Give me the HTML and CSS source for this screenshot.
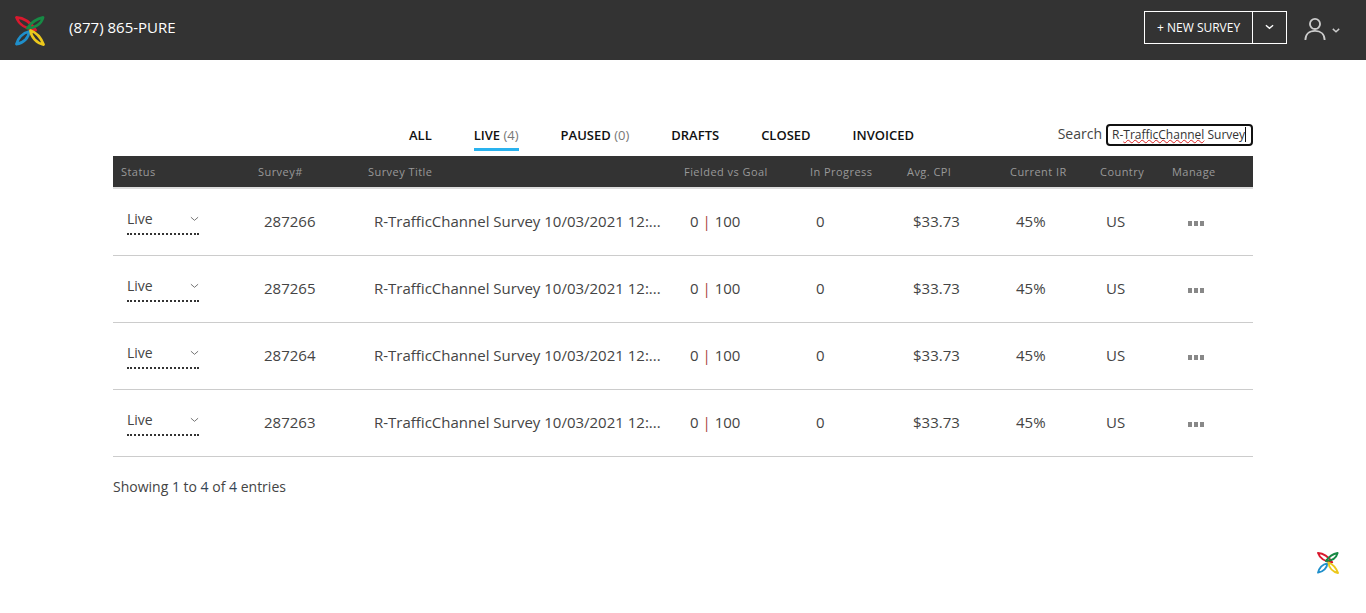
FILE: index.html
```html
<!DOCTYPE html>
<html lang="en">
<head>
  <meta charset="UTF-8">
  <title>Surveys</title>
  <meta name="viewport" content="width=device-width, initial-scale=1.0">
  <link rel="stylesheet" href="styles.css">
</head>
<body>
  <!-- Top bar -->
  <header class="topbar">
    <svg class="logo" viewBox="0 0 32 32" fill="none" stroke-width="2.800" stroke-linejoin="round">
      <g id="petals">
        <path stroke="#d9192e" d="M1.500 1.500C10 2 16 6 22 15 12 14 4 9 1.500 1.500Z"/>
        <path stroke="#178a45" d="M30 1.500C23 3 18 6 13 13 21 13 28 9 30 1.500Z"/>
        <path stroke="#1f8fcb" d="M1.500 30C3 24 8 18 15 16.500 15 23 9 29 1.500 30Z"/>
        <path stroke="#ecc81c" d="M30.500 30.500C28 24 24 18 16.500 15.500 17.500 23 23 29 30.500 30.500Z"/>
      </g>
    </svg>
    <span class="phone">(877) 865-PURE</span>
    <div class="topbar-right">
      <div class="new-survey">
        <span class="new-survey-label">+ NEW SURVEY</span>
        <span class="new-survey-caret">
          <svg class="chevron" viewBox="0 0 10 6" width="9" height="6"><path d="M1 1l4 3.500L9 1" fill="none" stroke="#fff" stroke-width="1.500"/></svg>
        </span>
      </div>
      <svg class="user-icon" viewBox="0 0 24 28" width="22" height="26" fill="none" stroke="#ccc" stroke-width="2">
        <circle cx="12" cy="8.500" r="5.500"/>
        <path d="M1.500 26c0-6 4-10 10.500-10s10.500 4 10.500 10"/>
      </svg>
      <svg class="chevron" viewBox="0 0 10 6" width="8" height="5"><path d="M1 1l4 3.500L9 1" fill="none" stroke="#ccc" stroke-width="1.800"/></svg>
    </div>
  </header>

  <main class="content">
    <!-- Tabs and search -->
    <div class="toolbar">
      <nav class="tabs">
        <a class="tab">ALL</a>
        <a class="tab active">LIVE <span class="count">(4)</span></a>
        <a class="tab">PAUSED <span class="count">(0)</span></a>
        <a class="tab">DRAFTS</a>
        <a class="tab">CLOSED</a>
        <a class="tab">INVOICED</a>
      </nav>
      <div class="search">
        <span>Search</span>
        <div class="search-box">R-<span class="misspelled">TrafficChannel</span> Survey<i class="cursor"></i></div>
      </div>
    </div>

    <!-- Surveys list -->
    <div class="list">
      <div class="row head">
        <div>Status</div>
        <div>Survey#</div>
        <div>Survey Title</div>
        <div>Fielded vs Goal</div>
        <div>In Progress</div>
        <div>Avg. CPI</div>
        <div>Current IR</div>
        <div>Country</div>
        <div>Manage</div>
      </div>
      <div class="row item">
        <div><div class="status">Live<svg viewBox="0 0 10 6" width="9" height="6"><path d="M1 1l4 3.500L9 1" fill="none" stroke="#666" stroke-width="1"/></svg></div></div>
        <div>287266</div>
        <div class="title">R-TrafficChannel Survey 10/03/2021 12:...</div>
        <div>0 <b class="sep">|</b> 100</div>
        <div>0</div>
        <div>$33.73</div>
        <div>45%</div>
        <div>US</div>
        <div class="manage"><i></i><i></i><i></i></div>
      </div>
      <div class="row item">
        <div><div class="status">Live<svg viewBox="0 0 10 6" width="9" height="6"><path d="M1 1l4 3.500L9 1" fill="none" stroke="#666" stroke-width="1"/></svg></div></div>
        <div>287265</div>
        <div class="title">R-TrafficChannel Survey 10/03/2021 12:...</div>
        <div>0 <b class="sep">|</b> 100</div>
        <div>0</div>
        <div>$33.73</div>
        <div>45%</div>
        <div>US</div>
        <div class="manage"><i></i><i></i><i></i></div>
      </div>
      <div class="row item">
        <div><div class="status">Live<svg viewBox="0 0 10 6" width="9" height="6"><path d="M1 1l4 3.500L9 1" fill="none" stroke="#666" stroke-width="1"/></svg></div></div>
        <div>287264</div>
        <div class="title">R-TrafficChannel Survey 10/03/2021 12:...</div>
        <div>0 <b class="sep">|</b> 100</div>
        <div>0</div>
        <div>$33.73</div>
        <div>45%</div>
        <div>US</div>
        <div class="manage"><i></i><i></i><i></i></div>
      </div>
      <div class="row item">
        <div><div class="status">Live<svg viewBox="0 0 10 6" width="9" height="6"><path d="M1 1l4 3.500L9 1" fill="none" stroke="#666" stroke-width="1"/></svg></div></div>
        <div>287263</div>
        <div class="title">R-TrafficChannel Survey 10/03/2021 12:...</div>
        <div>0 <b class="sep">|</b> 100</div>
        <div>0</div>
        <div>$33.73</div>
        <div>45%</div>
        <div>US</div>
        <div class="manage"><i></i><i></i><i></i></div>
      </div>
    </div>

    <p class="entries">Showing <span class="num">1</span> to <span class="num">4</span> of <span class="num">4</span> entries</p>
  </main>

  <svg class="corner-logo" viewBox="0 0 32 32" fill="none" stroke-width="2.800" stroke-linejoin="round"><use href="#petals"/></svg>
</body>
</html>
```

FILE: styles.css
```css
* {
  box-sizing: border-box;
  margin: 0;
  padding: 0;
}

html, body {
  height: 100%;
  overflow: hidden;
}

body {
  font-family: "Open Sans", sans-serif;
  background: #fff;
  color: #444;
  font-size: 14px;
}

/* Top bar */
.topbar {
  display: flex;
  align-items: center;
  height: 60px;
  padding: 0 26px 0 15px;
  background: #333;
  color: #fff;
}

.logo {
  width: 30px;
  height: 30px;
  margin-top: 1px;
}

.phone {
  margin: -6px 0 0 24px;
  font-size: 15px;
}

.topbar-right {
  display: flex;
  align-items: center;
  margin-left: auto;
}

.new-survey {
  display: flex;
  height: 33px;
  margin-top: -6px;
  border: 1px solid #fff;
  font-size: 12px;
}

.new-survey-label {
  display: flex;
  align-items: center;
  width: 108px;
  padding-left: 12px;
  border-right: 1px solid #fff;
}

.new-survey-caret {
  display: flex;
  align-items: center;
  justify-content: center;
  width: 33px;
}

.user-icon {
  margin: -2px 0 0 17px;
}

.user-icon + .chevron {
  margin: 0 0 0 6px;
}

/* Tabs and search */
.content {
  width: 1140px;
  margin-left: 113px;
}

.toolbar {
  display: flex;
  align-items: flex-start;
  height: 96px;
  padding-top: 64px;
}

.tabs {
  display: flex;
  gap: 42px;
  margin-left: 296px;
}

.tab {
  height: 27px;
  padding-top: 2px;
  color: #111;
  font-size: 13px;
  font-weight: 600;
}

.tab.active {
  border-bottom: 3px solid #29b2ee;
}

.count {
  color: #777;
  font-weight: 400;
}

.search {
  display: flex;
  align-items: center;
  gap: 4px;
  margin-left: auto;
  font-size: 14px;
  line-height: 18px;
}

.search-box {
  width: 147px;
  height: 22px;
  padding: 0 0 0 4px;
  border: 2px solid #111;
  border-radius: 4px;
  color: #333;
  font-size: 12px;
  line-height: 17px;
  white-space: nowrap;
  overflow: hidden;
}

.search > span {
  margin-top: -3px;
}

.misspelled {
  text-decoration: underline wavy #d22;
  text-decoration-thickness: 1px;
  text-underline-offset: 0;
}

.cursor {
  display: inline-block;
  width: 1px;
  height: 15px;
  background: #111;
  vertical-align: -3px;
}

/* Surveys list */
.row {
  display: grid;
  grid-template-columns: 137px 110px 316px 126px 97px 103px 90px 72px 89px;
}

.head {
  height: 33px;
  align-items: center;
  background: #333;
  border-bottom: 2px solid #ddd;
  color: #999;
  font-size: 11px;
  letter-spacing: 0.45px;
}

.head div {
  padding-left: 8px;
}

.item {
  height: 67px;
  align-items: center;
  border-bottom: 1px solid #ccc;
  font-size: 15px;
}

.item > div {
  padding-left: 14px;
  margin-top: -2px;
}

.title {
  white-space: nowrap;
}

.status {
  display: flex;
  align-items: center;
  justify-content: space-between;
  width: 72px;
  height: 28px;
  padding-bottom: 3px;
  border-bottom: 2px dotted #333;
  font-size: 14px;
}

.sep {
  color: #a44;
  font-weight: 400;
}

.manage {
  display: flex;
  gap: 2px;
  padding-left: 24px !important;
  margin-top: 2px !important;
}

.manage i {
  width: 4px;
  height: 5px;
  background: #888;
}

.entries {
  margin-top: 20px;
}

.num {
  color: #345;
}

/* Small logo in the corner */
.corner-logo {
  position: absolute;
  left: 1317px;
  top: 552px;
  width: 22px;
  height: 22px;
}
```
